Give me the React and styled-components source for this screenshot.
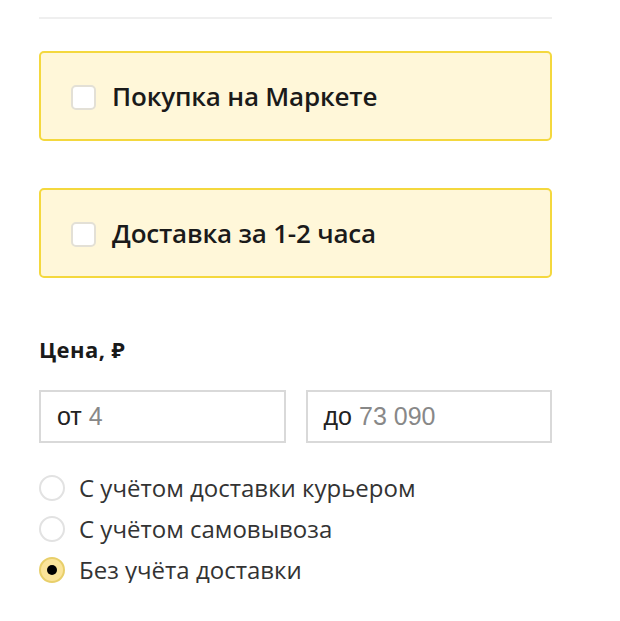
import styled, { createGlobalStyle } from 'styled-components';
import { useState } from 'react';

const GlobalStyle = createGlobalStyle`
    body {
        margin: 0;
        background: #fff;
        font-family: "Open Sans", "Noto Sans", sans-serif;
        color: #222;
    }
`;

const Panel = styled.div`
    width: 513px;
    padding: 17px 0 0 39px;
    display: flex;
    flex-direction: column;
`;

const Divider = styled.div`
    height: 2px;
    background: #efefef;
    margin-bottom: 32px;
`;

const Card = styled.label`
    box-sizing: border-box;
    height: 90px;
    display: flex;
    align-items: center;
    gap: 16px;
    padding-left: 30px;
    margin-bottom: ${({ gapAfter }) => gapAfter}px;
    background: #fff7d9;
    border: 2px solid #f4d83e;
    border-radius: 5px;
    cursor: pointer;
`;

const Box = styled.span`
    box-sizing: border-box;
    width: 25px;
    height: 25px;
    margin-top: 2px;
    background: #fff;
    border: 2px solid #e3e0d6;
    border-radius: 5px;
`;

const CardText = styled.span`
    font-size: 26px;
    font-weight: 600;
    color: #1a1a1a;
    letter-spacing: -0.2px;
`;

const Title = styled.div`
    font-size: 22px;
    line-height: 30px;
    font-weight: 700;
    color: #1a1a1a;
    letter-spacing: 0.4px;
    margin-bottom: 26px;
`;

const Inputs = styled.div`
    display: grid;
    grid-template-columns: 1fr 1fr;
    gap: 20px;
    margin-bottom: 31px;
`;

const Field = styled.div`
    box-sizing: border-box;
    height: 53px;
    display: flex;
    align-items: center;
    padding-left: 16px;
    border: 2px solid #d9d9d9;
    font-family: "Liberation Sans", Arial, sans-serif;
    font-size: 25px;
    gap: 7px;
`;

const Prefix = styled.span`
    color: #222;
`;

const Value = styled.span`
    color: #888;
`;

const Radios = styled.div`
    display: flex;
    flex-direction: column;
    gap: 14px;
`;

const RadioRow = styled.label`
    display: flex;
    align-items: center;
    gap: 14px;
    font-size: 24px;
    color: #333;
    height: 27px;
    cursor: pointer;
`;

const Circle = styled.span`
    box-sizing: border-box;
    width: 26px;
    height: 26px;
    border-radius: 50%;
    border: 2px solid ${({ checked }) => (checked ? '#e8cf6a' : '#e2e2e2')};
    background: ${({ checked }) => (checked ? '#fbe49a' : '#fff')};
    display: flex;
    align-items: center;
    justify-content: center;

    &::after {
        content: '';
        display: ${({ checked }) => (checked ? 'block' : 'none')};
        width: 10px;
        height: 10px;
        border-radius: 50%;
        background: #000;
    }
`;

const options = ['С учётом доставки курьером', 'С учётом самовывоза', 'Без учёта доставки'];

const App = () => {
    const [selected, setSelected] = useState(2);

    return (
        <Panel>
            <GlobalStyle />
            <Divider />
            <Card gapAfter={47}>
                <Box />
                <CardText>Покупка на Маркете</CardText>
            </Card>
            <Card gapAfter={56}>
                <Box />
                <CardText>Доставка за 1-2 часа</CardText>
            </Card>
            <Title>Цена, ₽</Title>
            <Inputs>
                <Field>
                    <Prefix>от</Prefix>
                    <Value>4</Value>
                </Field>
                <Field>
                    <Prefix>до</Prefix>
                    <Value>73 090</Value>
                </Field>
            </Inputs>
            <Radios>
                {options.map((text, i) => (
                    <RadioRow key={text} onClick={() => setSelected(i)}>
                        <Circle checked={selected === i} />
                        {text}
                    </RadioRow>
                ))}
            </Radios>
        </Panel>
    );
};

export default App;
